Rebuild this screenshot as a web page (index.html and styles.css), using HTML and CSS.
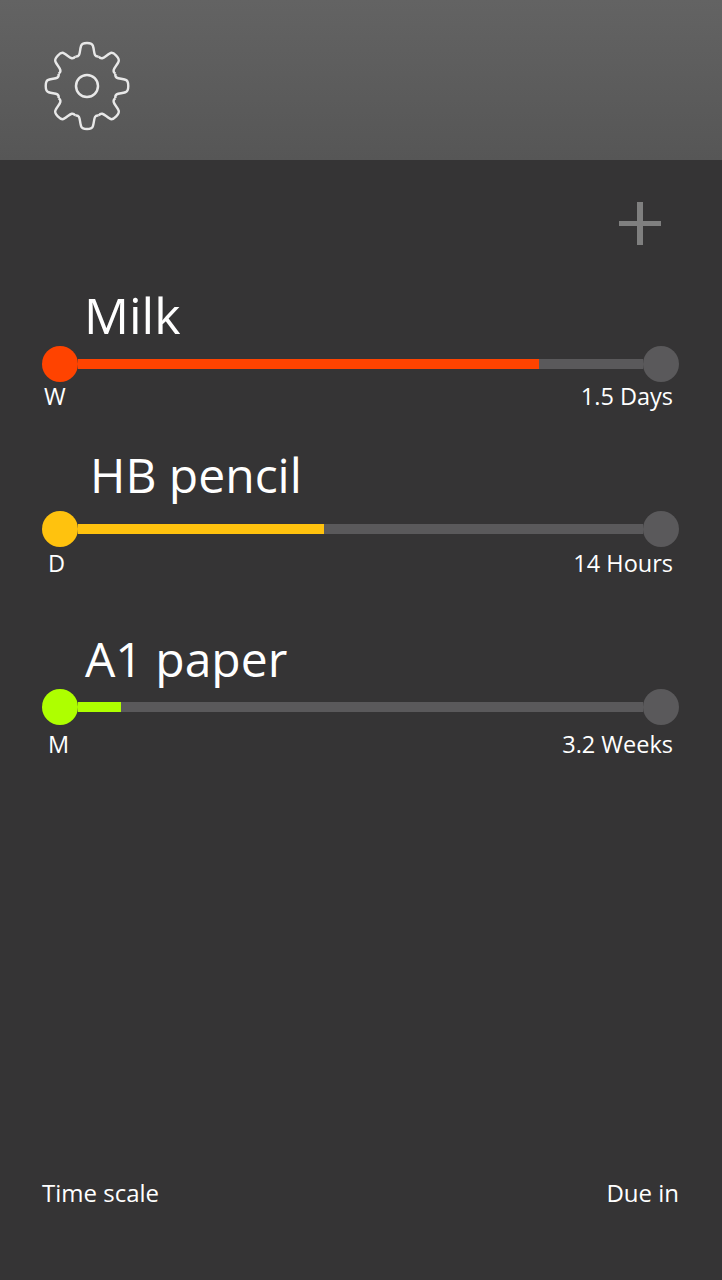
FILE: index.html
```html
<!DOCTYPE html>
<html lang="en">
<head>
  <meta charset="UTF-8" />
  <meta name="viewport" content="width=device-width, initial-scale=1.0"/>
  <title>Supplies</title>
  <link rel="stylesheet" href="styles.css">
</head>
<body>

  <header class="topbar">
    <svg class="gear" viewBox="-45 -45 90 90" width="90" height="90">
      <defs>
        <path id="tooth" d="M-12.2 -29.6 C-6.5 -28.5 -8 -35 -6.2 -40 Q-5.5 -43 0 -43 Q5.5 -43 6.2 -40 C8 -35 6.5 -28.5 12.2 -29.6"/>
      </defs>
      <g transform="scale(.96 1)">
        <use href="#tooth"/>
        <use href="#tooth" transform="rotate(45)"/>
        <use href="#tooth" transform="rotate(90)"/>
        <use href="#tooth" transform="rotate(135)"/>
        <use href="#tooth" transform="rotate(180)"/>
        <use href="#tooth" transform="rotate(225)"/>
        <use href="#tooth" transform="rotate(270)"/>
        <use href="#tooth" transform="rotate(315)"/>
      </g>
      <circle r="11"/>
    </svg>
  </header>

  <main class="content">
    <div class="add-row">
      <div class="add"></div>
    </div>

    <section class="item item-milk">
      <h2 class="item-name">Milk</h2>
      <div class="slider">
        <span class="dot dot-red"></span>
        <div class="bar"><div class="fill fill-red" style="width: 81.6%"></div></div>
        <span class="dot"></span>
      </div>
      <div class="labels">
        <span>W</span>
        <span>1.5 Days</span>
      </div>
    </section>

    <section class="item item-pencil">
      <h2 class="item-name">HB pencil</h2>
      <div class="slider">
        <span class="dot dot-yellow"></span>
        <div class="bar"><div class="fill fill-yellow" style="width: 43.5%"></div></div>
        <span class="dot"></span>
      </div>
      <div class="labels">
        <span>D</span>
        <span>14 Hours</span>
      </div>
    </section>

    <section class="item item-paper">
      <h2 class="item-name">A1 paper</h2>
      <div class="slider">
        <span class="dot dot-green"></span>
        <div class="bar"><div class="fill fill-green" style="width: 7.6%"></div></div>
        <span class="dot"></span>
      </div>
      <div class="labels">
        <span>M</span>
        <span>3.2 Weeks</span>
      </div>
    </section>
  </main>

  <footer class="legend">
    <span>Time scale</span>
    <span>Due in</span>
  </footer>

</body>
</html>
```

FILE: styles.css
```css
body {
  margin: 0;
  height: 1280px;
  overflow: hidden;
  display: flex;
  flex-direction: column;
  background: #353435;
  font-family: 'Open Sans', sans-serif;
  color: white;
}

.topbar {
  height: 160px;
  flex-shrink: 0;
  background: linear-gradient(to bottom, #636363, #565656);
  display: flex;
  align-items: center;
  padding-left: 42px;
  box-sizing: border-box;
}

.gear {
  fill: none;
  stroke: #e8e8e8;
  stroke-width: 2.5;
  margin-top: 12px;
}

.content {
  flex: 1;
  padding: 0 43px 0 42px;
}

.add-row {
  display: flex;
  justify-content: flex-end;
  padding: 42px 18px 0 0;
}

.add {
  width: 42px;
  height: 43px;
  background:
    linear-gradient(#7f7f7f, #7f7f7f) center / 100% 5px no-repeat,
    linear-gradient(#7f7f7f, #7f7f7f) center / 6px 100% no-repeat;
}

.item-name {
  margin: 0;
  font-size: 48px;
  font-weight: 400;
  line-height: 60px;
  padding-left: 43px;
}

.item-milk {
  margin-top: 40px;
}

.item-milk .item-name {
  font-size: 50px;
  padding-left: 42px;
  margin-bottom: 1px;
}

.item-milk .labels {
  margin-top: -2px;
}

.item-pencil {
  margin-top: 33px;
}

.item-pencil .item-name {
  padding-left: 48px;
  margin-bottom: 6px;
}

.item-pencil .labels span:first-child,
.item-paper .labels span:first-child {
  margin-left: 4px;
}

.item-paper {
  margin-top: 50px;
}

.item-paper .labels {
  margin-top: 3px;
}

.slider {
  display: flex;
  align-items: center;
}

.dot {
  width: 36px;
  height: 36px;
  border-radius: 50%;
  background: #5a595b;
  flex-shrink: 0;
}

.dot-red { background: #ff4300; }
.dot-yellow { background: #ffc20e; }
.dot-green { background: #aeff00; }

.bar {
  flex: 1;
  height: 10px;
  background: #5a595b;
}

.fill {
  height: 100%;
}

.fill-red { background: #ff4300; }
.fill-yellow { background: #ffc20e; }
.fill-green { background: #aeff00; }

.labels {
  display: flex;
  justify-content: space-between;
  padding: 0 6px 0 2px;
  font-size: 23.5px;
  line-height: 32px;
}

.legend {
  display: flex;
  justify-content: space-between;
  padding: 0 43px 71px 42px;
  font-size: 24px;
  line-height: 32px;
}
```
